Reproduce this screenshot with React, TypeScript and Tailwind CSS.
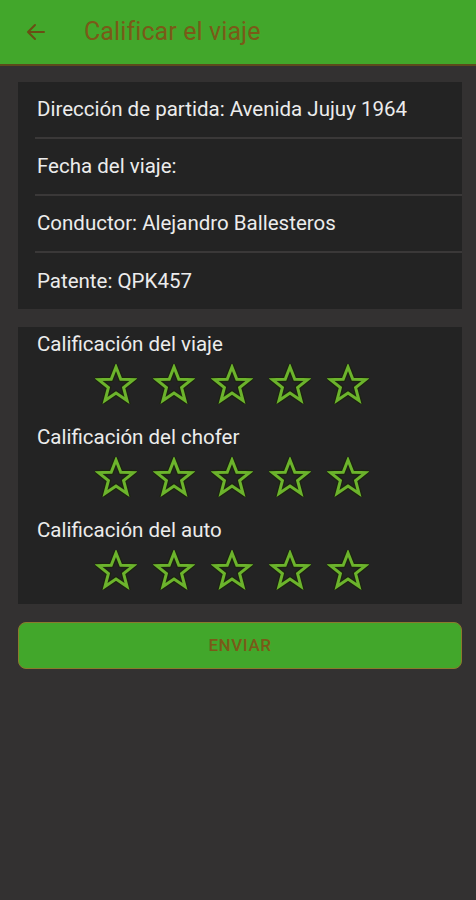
import React from "react";

function Star() {
  return (
    <svg width="42" height="40" viewBox="0 0 42 40">
      <polygon
        points="21,3 25.8,15.2 38.5,15.6 28.6,23.6 32,36.5 21,29 10,36.5 13.4,23.6 3.5,15.6 16.2,15.2"
        fill="none"
        stroke="#1c2410"
        strokeWidth="5.5"
        strokeLinejoin="miter"
      />
      <polygon
        points="21,3 25.8,15.2 38.5,15.6 28.6,23.6 32,36.5 21,29 10,36.5 13.4,23.6 3.5,15.6 16.2,15.2"
        fill="none"
        stroke="#6cb42c"
        strokeWidth="3"
        strokeLinejoin="miter"
      />
    </svg>
  );
}

function Stars() {
  return (
    <div className="flex gap-[16px] pl-[77px] h-[40px] items-center">
      <Star />
      <Star />
      <Star />
      <Star />
      <Star />
    </div>
  );
}

function Row({ text, last }: { text: string; last?: boolean }) {
  return (
    <div className={`${last ? "h-[56px]" : "h-[57px]"} flex flex-col`}>
      <div className="flex-1 flex items-center pl-[19px] text-[20.5px] text-[#ececec]">{text}</div>
      {!last && <div className="h-[2px] ml-[17px] bg-[#3a3838]" />}
    </div>
  );
}

function Label({ text, mt }: { text: string; mt: string }) {
  return <div className={`${mt} pl-[19px] text-[20.5px] text-[#ececec] h-[26px] leading-[26px]`}>{text}</div>;
}

export default function App() {
  return (
    <div className="w-[476px] h-[900px] bg-[#333131] flex flex-col" style={{ fontFamily: "Roboto, 'Noto Sans', sans-serif" }}>
      <div className="h-[66px] bg-[#42a72b] border-b-[2px] border-[#5c4a1c] flex items-center shrink-0">
        <svg className="ml-[24px]" width="24" height="24" viewBox="0 0 24 24">
          <path d="M20 12H5M11 5l-7 7 7 7" fill="none" stroke="#6a4e14" strokeWidth="2" strokeLinecap="round" strokeLinejoin="round" />
        </svg>
        <span className="ml-[36px] text-[25px] text-[#7a5a18] tracking-[0.1px]">Calificar el viaje</span>
      </div>
      <div className="pl-[18px] pr-[14px] pt-[16px] flex flex-col">
        <div className="bg-[#232323]">
          <Row text="Dirección de partida: Avenida Jujuy 1964" />
          <Row text="Fecha del viaje:" />
          <Row text="Conductor: Alejandro Ballesteros" />
          <Row text="Patente: QPK457" last />
        </div>
        <div className="mt-[18px] bg-[#232323] h-[277px] flex flex-col pt-[4px]">
          <Label text="Calificación del viaje" mt="mt-0" />
          <div className="mt-[7px]"><Stars /></div>
          <Label text="Calificación del chofer" mt="mt-[20px]" />
          <div className="mt-[7px]"><Stars /></div>
          <Label text="Calificación del auto" mt="mt-[20px]" />
          <div className="mt-[7px]"><Stars /></div>
        </div>
        <button className="mt-[18px] h-[47px] rounded-[8px] bg-[#42a72b] border border-[#8a7a2c] flex items-center justify-center text-[17px] font-medium text-[#7a5a18] tracking-[0.6px]">
          ENVIAR
        </button>
      </div>
    </div>
  );
}
